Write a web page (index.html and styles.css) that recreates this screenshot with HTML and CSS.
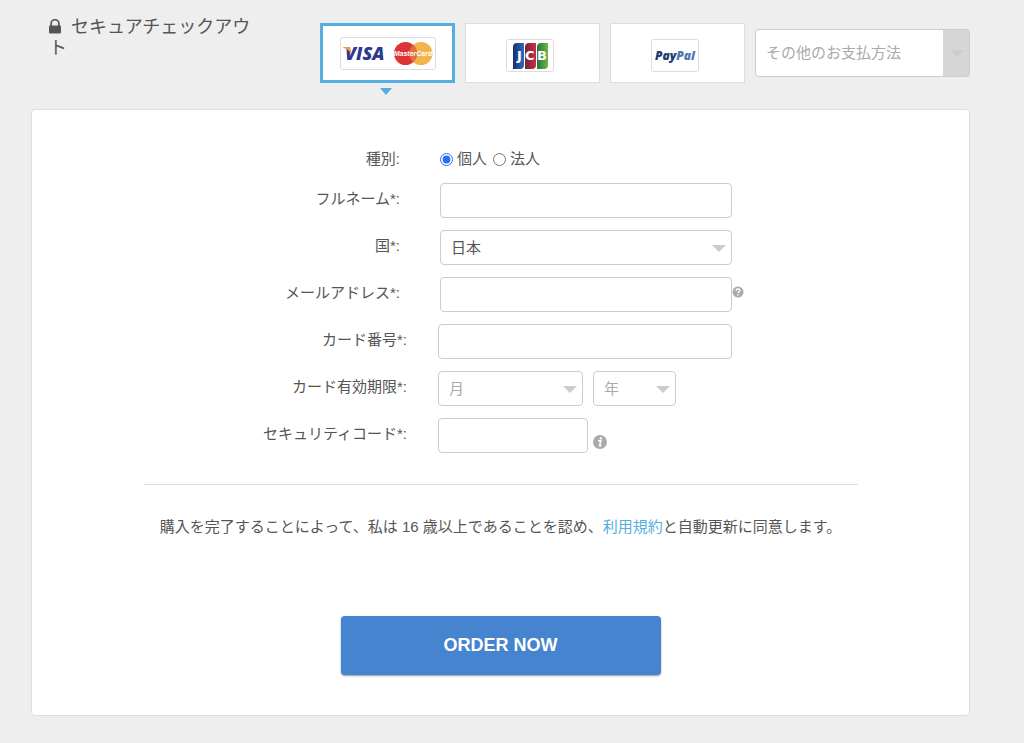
FILE: index.html
```html
<!DOCTYPE html>
<html lang="ja">
<head>
<meta charset="utf-8">
<meta name="viewport" content="width=device-width, initial-scale=1">
<title>セキュアチェックアウト</title>
<link rel="stylesheet" href="styles.css">
</head>
<body>
<main class="page">
  <header class="header">
    <h1 class="title"><svg class="lock" viewBox="0 0 12 15" aria-hidden="true"><path d="M2.1 7V4.6a3.9 3.9 0 0 1 7.8 0V7" fill="none" stroke="currentColor" stroke-width="1.7"/><rect x="0" y="6.6" width="12" height="8" rx="1" fill="currentColor"/></svg>セキュアチェックアウト</h1>
    <div class="methods">
      <button type="button" class="method method-active" aria-label="Visa / MasterCard">
        <svg class="logo" width="96" height="33" viewBox="0 0 96 33">
          <rect x="0.5" y="0.5" width="95" height="32" rx="2" fill="#fff" stroke="#dcdcdc"/>
          <text x="5" y="23" class="visa">VISA</text>
          <path d="M3 10h5.500q1.600 0 1.900 1.600l1 5Q8.500 12.500 3 10.600z" fill="#eba13d"/>
          <circle cx="81" cy="16.500" r="11.500" fill="#f2b44d"/>
          <circle cx="65.500" cy="16.500" r="11.500" fill="#dc3436"/>
          <path d="M73.200 8a11.500 11.500 0 0 1 0 17a11.500 11.500 0 0 1 0-17z" fill="#e2713b"/>
          <text x="73" y="19" text-anchor="middle" class="mastercard">MasterCard</text>
        </svg>
      </button>
      <button type="button" class="method" aria-label="JCB">
        <svg class="logo logo-low" width="48" height="33" viewBox="0 0 48 33">
          <defs>
            <linearGradient id="jb"><stop offset="0" stop-color="#1c2c72"/><stop offset="1" stop-color="#2b6db8"/></linearGradient>
            <linearGradient id="jr"><stop offset="0" stop-color="#6d2a38"/><stop offset="1" stop-color="#d02b49"/></linearGradient>
            <linearGradient id="jg"><stop offset="0" stop-color="#26753a"/><stop offset="1" stop-color="#6db748"/></linearGradient>
          </defs>
          <rect x="0.5" y="0.5" width="47" height="32" rx="2" fill="#fff" stroke="#dcdcdc"/>
          <path d="M11 4h7v22q0 4-4 4H7V8q0-4 4-4z" fill="url(#jb)"/>
          <path d="M23 4h7v22q0 4-4 4h-7V8q0-4 4-4z" fill="url(#jr)"/>
          <path d="M35 4h7v22q0 4-4 4h-7V8q0-4 4-4z" fill="url(#jg)"/>
          <text x="11" y="21" class="jcb">J</text>
          <text x="19" y="21" class="jcb">C</text>
          <text x="31" y="21" class="jcb">B</text>
        </svg>
      </button>
      <button type="button" class="method" aria-label="PayPal">
        <svg class="logo logo-low" width="48" height="33" viewBox="0 0 48 33">
          <rect x="0.5" y="0.5" width="47" height="32" rx="2" fill="#fff" stroke="#dcdcdc"/>
          <text x="24" y="21" text-anchor="middle" class="paypal"><tspan fill="#20396f">Pay</tspan><tspan fill="#4b79ae">Pal</tspan></text>
        </svg>
      </button>
      <div class="select other">
        <select class="control muted" aria-label="その他のお支払方法"><option>その他のお支払方法</option></select>
      </div>
    </div>
  </header>

  <form class="card">
    <div class="fields">
      <div class="row row-type" role="radiogroup" aria-labelledby="type-label">
        <span class="label" id="type-label">種別:</span>
        <div class="field radios">
          <input type="radio" id="person" name="type" checked><label for="person">個人</label>
          <input type="radio" id="company" name="type"><label for="company">法人</label>
        </div>
      </div>
      <div class="row">
        <label class="label" for="name">フルネーム*:</label>
        <div class="field"><input class="control" id="name" type="text"></div>
      </div>
      <div class="row">
        <label class="label" for="country">国*:</label>
        <div class="field"><div class="select wide"><select class="control" id="country"><option>日本</option></select></div></div>
      </div>
      <div class="row">
        <label class="label" for="email">メールアドレス*:</label>
        <div class="field">
          <input class="control" id="email" type="email">
          <svg class="help" viewBox="0 0 12 12" role="img" aria-label="ヘルプ"><circle cx="6" cy="6" r="5.500" fill="#aaa"/><path d="M4.200 4.700q0-1.700 1.900-1.700t1.800 1.500q0 .8-.9 1.300t-.9 1.300" fill="none" stroke="#fff" stroke-width="1.400"/><rect x="5.300" y="8" width="1.500" height="1.500" fill="#fff"/></svg>
        </div>
      </div>
      <div class="row row-card">
        <label class="label" for="number">カード番号*:</label>
        <div class="field"><input class="control" id="number" type="text" inputmode="numeric"></div>
      </div>
      <div class="row row-card">
        <label class="label" for="month">カード有効期限*:</label>
        <div class="field expiry">
          <div class="select month"><select class="control muted" id="month"><option>月</option></select></div>
          <div class="select year"><select class="control muted" aria-label="年"><option>年</option></select></div>
        </div>
      </div>
      <div class="row row-card">
        <label class="label" for="code">セキュリティコード*:</label>
        <div class="field">
          <input class="control code" id="code" type="text" inputmode="numeric">
          <svg class="info" viewBox="0 0 14 14" role="img" aria-label="情報"><circle cx="7" cy="7" r="7" fill="#aaa"/><path d="M5.200 5.900h2.600L6.700 10.600h1.700" fill="none" stroke="#fff" stroke-width="1.600"/><circle cx="7.900" cy="3.400" r="1.200" fill="#fff"/></svg>
        </div>
      </div>
    </div>
    <hr class="divider">
    <p class="consent">購入を完了することによって、私は 16 歳以上であることを認め、<a href="#terms">利用規約</a>と自動更新に同意します。</p>
    <button type="submit" class="order">ORDER NOW</button>
  </form>
</main>
</body>
</html>
```
FILE: styles.css
```css
* {
  box-sizing: border-box;
}

body {
  margin: 0;
  background: #eee;
  color: #555;
  font-family: "Liberation Sans", "Noto Sans CJK JP", sans-serif;
  font-size: 15px;
  line-height: 20px;
}

.page {
  padding: 0 54px 27px 31px;
}

.header {
  display: flex;
  align-items: flex-start;
  justify-content: space-between;
  margin-bottom: 26px;
}

.title {
  flex: 1;
  margin: 0;
  padding: 17px 52px 0 18px;
  font-size: 18px;
  font-weight: 400;
  line-height: 21px;
}

.lock {
  width: 12px;
  height: 15px;
  margin-right: 10px;
  vertical-align: -1px;
}

.methods {
  display: flex;
  gap: 10px;
  padding: 23px 0 0;
}

.method {
  position: relative;
  display: flex;
  align-items: center;
  justify-content: center;
  width: 135px;
  height: 60px;
  padding: 0;
  border: 1px solid #ddd;
  background: #fff;
}

.method-active {
  border: 3px solid #54aee1;
}

.method-active::after {
  content: "";
  position: absolute;
  top: 62px;
  left: 57px;
  border: 6px solid transparent;
  border-top: 7px solid #54aee1;
  border-bottom: 0;
}

.logo-low {
  margin: 4px 5px 0 0;
}

.visa {
  font: italic 800 18px "Open Sans", sans-serif;
  fill: #2b3990;
}

.mastercard {
  font: italic 700 7px "Liberation Sans", sans-serif;
  fill: #fff;
}

.jcb {
  font: 700 13px "DejaVu Sans", sans-serif;
  fill: #fff;
}

.paypal {
  font: italic 800 12px "Open Sans", sans-serif;
}

.control {
  display: block;
  width: 100%;
  height: 35px;
  margin: 0;
  padding: 0 10px;
  border: 1px solid #ccc;
  border-radius: 4px;
  background: #fff;
  color: #555;
  font: inherit;
  appearance: none;
}

.muted {
  color: #aaa;
}

.select {
  position: relative;
}

.select::after {
  content: "";
  position: absolute;
  top: 15px;
  right: 6px;
  border: 7px solid transparent;
  border-top-color: #ccc;
  border-bottom: 0;
  pointer-events: none;
}

.other {
  width: 215px;
  margin-top: 6px;
}

.other .control {
  height: 48px;
  background: linear-gradient(to left, #d6d6d6 26px, #fff 26px);
}

.other::after {
  top: 21px;
}

.card {
  display: flex;
  flex-direction: column;
  padding: 39px 0 40px;
  border: 1px solid #ddd;
  border-radius: 4px;
  background: #fff;
}

.fields {
  display: grid;
  gap: 12px;
}

.row {
  display: grid;
  grid-template-columns: 368px 292px 1fr;
  column-gap: 40px;
}

.row-card {
  grid-template-columns: 375px 294px 1fr;
  column-gap: 31px;
}

.label {
  padding-top: 6px;
  text-align: right;
}

.row-type .label {
  padding-top: 0;
}

.field {
  position: relative;
  display: flex;
  align-items: flex-start;
}

.wide {
  width: 100%;
}

.radios {
  align-items: center;
  height: 20px;
  margin-bottom: 2px;
}

.radios input {
  width: 13px;
  height: 13px;
  margin: 0 4px 0 0;
  accent-color: #2a70f5;
}

.radios label + input {
  margin-left: 6px;
}

.help {
  position: absolute;
  top: 9px;
  left: 100%;
  width: 12px;
  height: 12px;
}

.expiry {
  gap: 10px;
}

.month {
  width: 145px;
}

.year {
  width: 83px;
}

.code {
  width: 150px;
}

.info {
  width: 14px;
  height: 14px;
  margin: 17px 0 0 5px;
}

.divider {
  width: auto;
  margin: 31px 111px 0 112px;
  border: 0;
  border-top: 1px solid #ddd;
}

.consent {
  margin: 32px 0 79px;
  text-align: center;
}

.consent a {
  color: #54aee1;
  text-decoration: none;
}

.order {
  align-self: center;
  width: 320px;
  height: 59px;
  padding: 0;
  border: 0;
  border-radius: 4px;
  background: #4684d0;
  box-shadow: 0 1px 2px #999;
  color: #fff;
  font: 700 18px "Liberation Sans", sans-serif;
}
```
